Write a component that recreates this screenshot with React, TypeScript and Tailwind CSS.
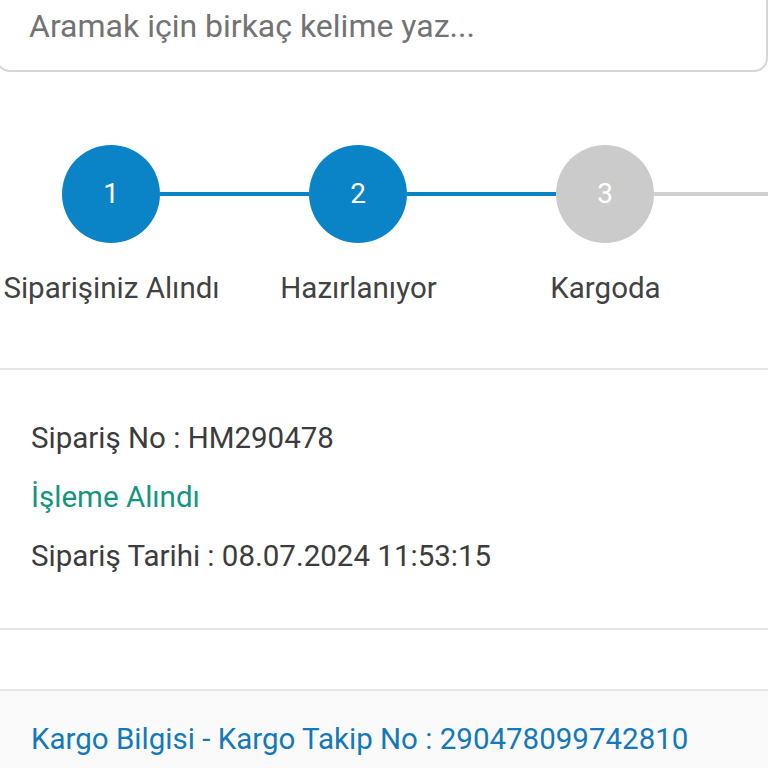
import React from 'react'

const steps = [
    { n: 1, label: 'Siparişiniz Alındı', done: true },
    { n: 2, label: 'Hazırlanıyor', done: true },
    { n: 3, label: 'Kargoda', done: false },
]

export default function App() {
    return (
        <div className="w-[768px] h-[768px] overflow-hidden bg-white font-['Roboto',sans-serif]">
            {/* Search */}
            <div className="h-[72px] ml-[-4px] border-x-2 border-b-2 border-[#d6d6d6] rounded-b-[14px] pl-[31px] pt-[8px]">
                <div className="text-[32px] leading-[36px] text-[#737373]">Aramak için birkaç kelime yaz...</div>
            </div>

            {/* Stepper */}
            <div className="pt-[73px] h-[296px]">
                <div className="flex items-center pl-[62px]">
                    {steps.map((s, i) => (
                        <React.Fragment key={s.n}>
                            <div
                                className={
                                    'w-[98px] h-[98px] shrink-0 rounded-full flex items-center justify-center text-white text-[28px] ' +
                                    (s.done ? 'bg-[#0a84c6]' : 'bg-[#cbcbcb]')
                                }
                            >
                                {s.n}
                            </div>
                            <div
                                className={
                                    'h-[4px] shrink-0 ' +
                                    (i < 2 ? 'w-[149px] bg-[#0a84c6]' : 'w-[200px] bg-[#d0d0d0]')
                                }
                            />
                        </React.Fragment>
                    ))}
                </div>
                <div className="flex ml-[-12px] mt-[28px]">
                    {steps.map((s) => (
                        <div key={s.n} className="w-[247px] shrink-0 text-center text-[29.5px] leading-[34px] text-[#424242] whitespace-nowrap">
                            {s.label}
                        </div>
                    ))}
                </div>
            </div>

            {/* Order info */}
            <div className="border-t-2 border-[#e6e6e6] h-[260px] pl-[31px] pt-[51px] flex flex-col gap-[25px] text-[29.5px] leading-[34px]">
                <div className="text-[#3c3c3c]">Sipariş No : HM290478</div>
                <div className="text-[#15957f]">İşleme Alındı</div>
                <div className="text-[#3c3c3c]">Sipariş Tarihi : 08.07.2024 11:53:15</div>
            </div>

            <div className="border-t-2 border-[#e6e6e6] h-[61px]" />

            {/* Kargo */}
            <div className="border-t-2 border-[#e6e6e6] bg-[#fafafa] h-[100px] pl-[31px] pt-[31px]">
                <div className="text-[29.5px] leading-[34px] text-[#1479b8]">Kargo Bilgisi - Kargo Takip No : 290478099742810</div>
            </div>
        </div>
    )
}
